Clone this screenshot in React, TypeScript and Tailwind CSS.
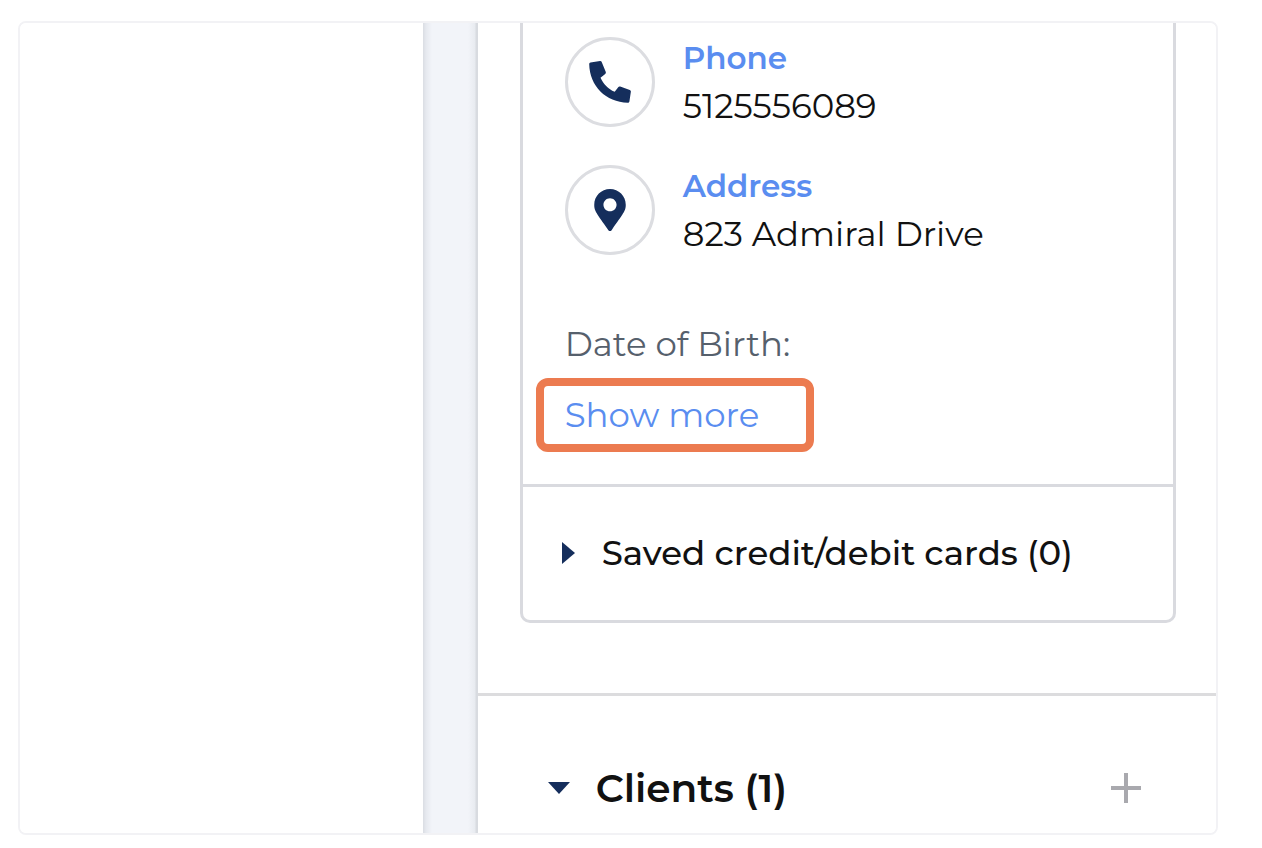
import React from "react";
import { FaMapMarkerAlt } from "react-icons/fa";

interface ContactRowInterface {
    label: string;
    value: string;
    icon: React.ReactNode;
}

const PhoneIcon = () => {
    return (
        <svg className="size-[42px] fill-[#152e5c]" viewBox="0 0 42 42">
            <path d="M1.500 1.500L11 0.100Q12.400 0 12.800 1.200L16.800 11Q17.200 12.100 16.200 12.900L11.500 16.700C14.500 23 19 28 25.700 30.700L29.200 26.200Q30 25.200 31.200 25.600L40.800 28.900Q42 29.400 41.900 30.600L40.400 40.500Q40.200 41.800 38.800 41.700C17 41.300 0.600 25 0.200 3Q0.200 1.700 1.500 1.500Z" />
        </svg>
    )
}

const ContactRow = ({label, value, icon}: ContactRowInterface) => {
    return (
        <div className="flex items-center gap-7">
            <div className="flex size-[90px] shrink-0 items-center justify-center rounded-full border-3 border-[#dcdde1] text-[#152e5c]">
                {icon}
            </div>
            <dl className="leading-[48px]">
                <dt className="text-[31px] font-semibold text-[#5a8df0]">{label}</dt>
                <dd className="text-[34px] text-[#111111]">{value}</dd>
            </dl>
        </div>
    )
}

const App = () => {
    return (
        <div className="bg-white pt-[21px] pr-11 pb-[13px] pl-[18px] font-[Montserrat,Inter,sans-serif]">
            <div className="grid grid-cols-[6fr_55px_11fr] overflow-hidden rounded-lg border-2 border-[#f2f2f5]">
                <aside className="bg-white" />

                <div className="bg-[linear-gradient(to_right,#dadde3,#e6e9ef_3px,#f2f4f9_9px,#f2f4f9_45px,#e8ebf0_52px,#d8dbe0_53px)]" />

                <main className="bg-white">
                    <section className="mr-10 ml-[42px] rounded-b-[10px] border-3 border-t-0 border-[#d9dadf]">
                        <div className="px-[42px] pt-[11px] pb-8">
                            <div className="flex flex-col gap-8">
                                <ContactRow label="Phone" value="5125556089" icon={<PhoneIcon />} />
                                <ContactRow label="Address" value="823 Admiral Drive" icon={<FaMapMarkerAlt className="size-[42px]" />} />
                            </div>

                            <p className="mt-[62px] text-[34px] leading-[48px] text-[#56606c]">Date of Birth:</p>
                            <button className="mt-[10px] -ml-[29px] flex w-[278px] items-center rounded-xl border-8 border-[#ec7b50] px-[21px] py-[5px] text-[34px] leading-[48px] text-[#5a8df0]">
                                Show more
                            </button>
                        </div>

                        <button className="flex w-full items-center gap-[27px] border-t-3 border-[#d9dadf] px-[39px] pt-[42px] pb-[43px] text-[34px] leading-[48px] font-medium text-[#111111]">
                            <svg className="h-[22px] w-[13px] fill-[#152e5c]" viewBox="0 0 13 22">
                                <path d="M0 0L13 11L0 22Z" />
                            </svg>
                            Saved credit/debit cards (0)
                        </button>
                    </section>

                    <section className="mt-[70px] flex items-center justify-between border-t-3 border-[#dcdcde] pt-16 pr-[75px] pb-[17px] pl-[70px]">
                        <button className="flex items-center gap-[26px] text-[39px] leading-[56px] font-semibold text-[#111111]">
                            <svg className="h-3 w-[22px] fill-[#152e5c]" viewBox="0 0 22 12">
                                <path d="M0 0H22L11 12Z" />
                            </svg>
                            Clients (1)
                        </button>
                        <button aria-label="Add client">
                            <svg className="size-[30px] stroke-[#a9a9ae] stroke-4" viewBox="0 0 30 30">
                                <path d="M15 0V30M0 15H30" />
                            </svg>
                        </button>
                    </section>
                </main>
            </div>
        </div>
    )
}

export default App;
